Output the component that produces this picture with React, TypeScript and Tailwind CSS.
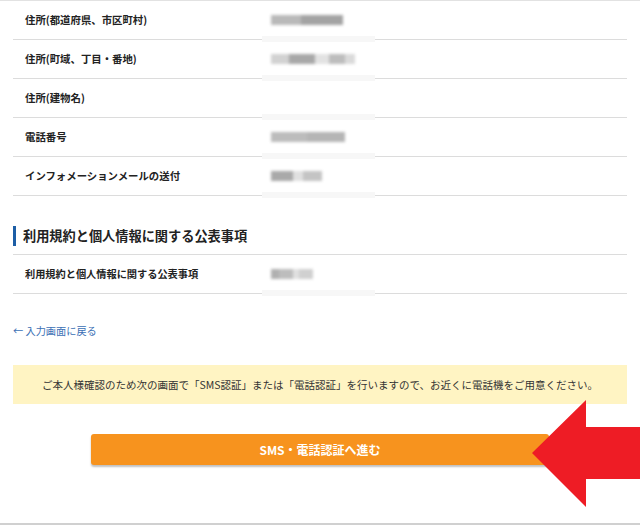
const font = { fontFamily: '"Noto Sans CJK JP", "Noto Sans", sans-serif' };

type Row = { label: string; blocks: { w: number; c: string }[] };

const rows: Row[] = [
  {
    label: '住所(都道府県、市区町村)',
    blocks: [
      { w: 30, c: '#b9b9b9' },
      { w: 42, c: '#a3a3a3' },
    ],
  },
  {
    label: '住所(町域、丁目・番地)',
    blocks: [
      { w: 18, c: '#d2d2d2' },
      { w: 26, c: '#a8a8a8' },
      { w: 14, c: '#e2e2e2' },
      { w: 16, c: '#bdbdbd' },
      { w: 10, c: '#dadada' },
    ],
  },
  { label: '住所(建物名)', blocks: [] },
  {
    label: '電話番号',
    blocks: [
      { w: 36, c: '#bcbcbc' },
      { w: 38, c: '#b5b5b5' },
    ],
  },
  {
    label: 'インフォメーションメールの送付',
    blocks: [
      { w: 22, c: '#a9a9a9' },
      { w: 10, c: '#e0e0e0' },
      { w: 19, c: '#c4c4c4' },
    ],
  },
];

function BlurValue({ blocks }: { blocks: { w: number; c: string }[] }) {
  return (
    <div className="relative h-full w-[113px]">
      {blocks.length > 0 && (
        <div className="flex h-full items-center pl-[9px]">
          <div className="flex h-[10px] blur-[1.5px]">
            {blocks.map((b, i) => (
              <div key={i} className="h-full" style={{ width: b.w, backgroundColor: b.c }} />
            ))}
          </div>
        </div>
      )}
      {/* light patch that hides the rule under the blurred value */}
      <div className="absolute bottom-[-3px] left-0 h-[6px] w-full bg-[#f7f7f7]" />
    </div>
  );
}

function TableRow({ row }: { row: Row }) {
  return (
    <div className="flex h-[39px] border-b border-[#dcdcdc]">
      <div className="flex w-[249px] items-center pl-3 text-[10.4px] font-bold text-[#222]">
        {row.label}
      </div>
      <BlurValue blocks={row.blocks} />
    </div>
  );
}

export default function App() {
  return (
    <div className="relative h-[525px] w-[640px] overflow-hidden bg-white" style={font}>
      <div className="border-t border-[#e2e2e2]">
        <div className="mx-[13px]">
          {rows.map((r) => (
            <TableRow key={r.label} row={r} />
          ))}

          <div className="mt-[30px] border-b border-[#dcdcdc] pb-[8px]">
            <div className="flex h-[20px] items-center border-l-[3px] border-[#1d5ea6] pl-[7px] text-[13.2px] font-bold text-[#222]">
              利用規約と個人情報に関する公表事項
            </div>
          </div>

          <div className="flex h-[39px] border-b border-[#dcdcdc]">
            <div className="flex w-[249px] items-center pl-3 text-[10.2px] font-bold text-[#222]">
              利用規約と個人情報に関する公表事項
            </div>
            <BlurValue
              blocks={[
                { w: 8, c: '#b0b0b0' },
                { w: 14, c: '#bdbdbd' },
                { w: 6, c: '#e0e0e0' },
                { w: 14, c: '#d0d0d0' },
              ]}
            />
          </div>

          <div className="mt-[29px] h-[16px] text-[10.2px] leading-[16px] text-[#3b70b5]">
            ← 入力画面に戻る
          </div>

          <div className="mt-[26px] flex h-[39px] items-center justify-center bg-[#fff4c3] text-[10.5px] text-[#333]">
            ご本人様確認のため次の画面で「SMS認証」または「電話認証」を行いますので、お近くに電話機をご用意ください。
          </div>

          <div className="mt-[30px] flex justify-center">
            <button className="flex h-[31px] w-[458px] items-center justify-center rounded-[3px] bg-[#f7931e] text-[12px] font-bold text-white shadow-[0_2px_2px_rgba(0,0,0,0.25)]">
              SMS・電話認証へ進む
            </button>
          </div>
        </div>
      </div>

      <div className="absolute bottom-0 left-0 h-[2px] w-full bg-[#d0d0d0]" />

      <svg
        className="absolute left-[532px] top-[400px]"
        width="108"
        height="107"
        viewBox="0 0 108 107"
      >
        <polygon points="0,53 54,0 54,27 108,27 108,79 54,79 54,107" fill="#ee1c25" />
      </svg>
    </div>
  );
}
